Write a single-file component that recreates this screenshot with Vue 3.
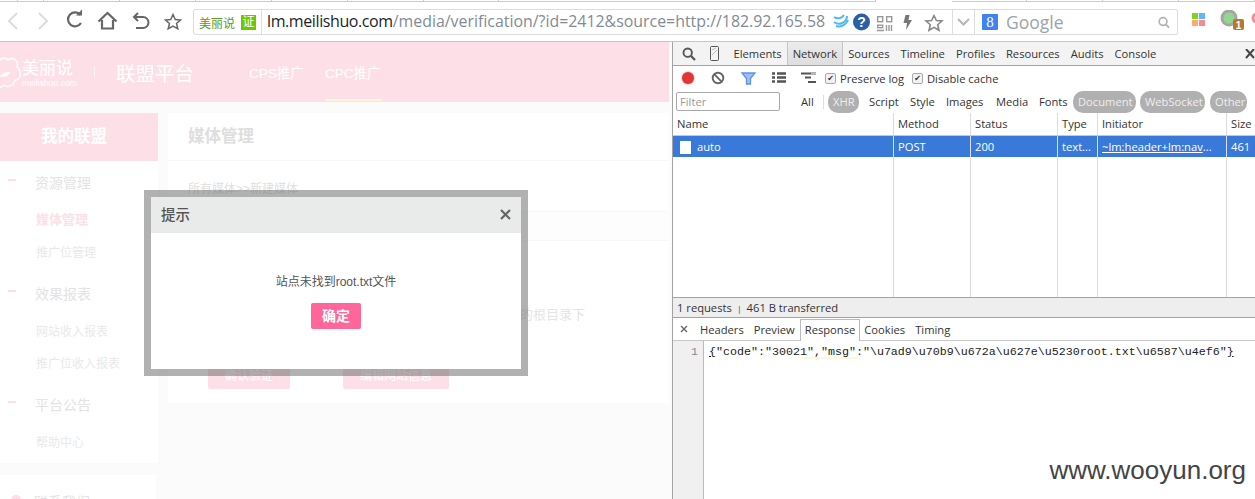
<script setup>
const tabs = ['Elements','Network','Sources','Timeline','Profiles','Resources','Audits','Console']
const topTicks = [23,32,96,95,96,95,95,95]
const nav = [
  { head: '资源管理', items: [{ t: '媒体管理', on: true }, { t: '推广位管理' }] },
  { head: '效果报表', items: [{ t: '网站收入报表' }, { t: '推广位收入报表' }] },
  { head: '平台公告', items: [{ t: '帮助中心' }] }
]
const filters = [
  { t: 'Script', w: 41 }, { t: 'Style', w: 36 }, { t: 'Images', w: 50 }, { t: 'Media', w: 43 }, { t: 'Fonts', w: 34 }
]
const cols = ['Name','Method','Status','Type','Initiator','Size']
</script>

<template>
  <div class="root">
    <div class="tabstrip">
      <span v-for="(w,i) in topTicks" :key="i" class="tick" :style="{ width: w + 'px' }"></span>
      <span class="tick wide"></span>
      <span class="gapTabs"></span>
      <span class="tick t2"></span><span class="tick t2"></span><span class="tick t2"></span><span class="tick t3"></span>
    </div>
    <header class="toolbar">
      <svg class="nav" width="190" height="38" viewBox="0 0 190 38">
        <g fill="none" stroke-linecap="butt" transform="translate(0,-3)">
          <path d="M17 14 L9 22 L17 30" transform="translate(0,-1)" stroke="#dcdcdc" stroke-width="2"/>
          <path d="M39 14 L47 22 L39 30" transform="translate(0,-1)" stroke="#dcdcdc" stroke-width="2"/>
          <path d="M80.5 16 A7 7 0 1 0 81 24" stroke="#666" stroke-width="2.2" transform="translate(0,-1)"/>
          <path d="M76 16 L82 16 L82 10 Z" fill="#666" transform="translate(0,-0.5)"/>
          <path d="M98.5 21.5 L107.5 13 L116.5 21.5 M102 20 V28.5 H113 V20" stroke="#666" stroke-width="2.2"/>
          <path d="M134 17 H143 A5.5 5.5 0 0 1 143 28 H136" stroke="#666" stroke-width="2"/>
          <path d="M138 13 L134 17 L138 21" stroke="#666" stroke-width="2"/>
        </g>
        <path d="M173 11.5 L175.3 16.5 L180.5 17 L176.5 20.4 L177.8 25.8 L173 23 L168.2 25.8 L169.5 20.4 L165.5 17 L170.7 16.5 Z" fill="none" stroke="#666" stroke-width="1.5"/>
      </svg>
      <div class="address">
        <span class="brand">美丽说</span>
        <span class="cert">证</span>
        <span class="url"><b>lm.meilishuo.com</b>/media/verification/?id=2412&amp;source=http://182.92.165.58</span>
        <span class="addrIcons">
          <svg width="119" height="24" viewBox="0 0 119 24">
            <g fill="none" stroke="#4cb8f5" stroke-width="2">
              <path d="M1 12 A8 8 0 0 0 14 6"/><path d="M1 7 A7 7 0 0 0 11 5"/><path d="M3 16 A10 10 0 0 0 15 10"/>
            </g>
            <circle cx="28.5" cy="12" r="8.5" fill="#2d5fa6"/>
            <text x="28.5" y="17" text-anchor="middle" class="qm">?</text>
            <g fill="none" stroke="#999" stroke-width="1.4">
              <rect x="44.7" y="6.7" width="5" height="5"/><rect x="53.7" y="6.7" width="5" height="5"/><rect x="44.7" y="15.2" width="5" height="2.5"/>
              <path d="M44 20.5 H51 M53.5 15 V21 M56 15 V21 M58.5 15 V21"/>
            </g>
            <path d="M72.5 5 L76.5 5 L75.5 10 L79 10 L73 20 L74 13 L70.5 13 Z" fill="#777"/>
            <path d="M101 5.5 L103.4 10.5 L109 11 L104.7 14.7 L106 20.3 L101 17.4 L96 20.3 L97.3 14.7 L93 11 L98.6 10.5 Z" fill="none" stroke="#888" stroke-width="1.6"/>
          </svg>
        </span>
        <span class="drop">
          <svg width="13" height="8" viewBox="0 0 13 8"><path d="M1 1 L6.5 6.5 L12 1" fill="none" stroke="#b5b5b5" stroke-width="2"/></svg>
        </span>
        <span class="search">
          <span class="gbox">8</span>
          <span class="gword">Google</span>
          <svg class="lens" width="12" height="13" viewBox="0 0 13 13"><circle cx="5.5" cy="5.5" r="4.2" fill="none" stroke="#b3b3b3" stroke-width="1.8"/><path d="M8.5 8.5 L12 12" stroke="#b3b3b3" stroke-width="2"/></svg>
        </span>
      </div>
      <svg class="ext" width="63" height="24" viewBox="0 0 63 24">
        <rect x="0" y="3" width="6" height="6" fill="#7ed321"/><rect x="7" y="3" width="6" height="6" fill="#62b5f5"/>
        <rect x="0" y="10" width="6" height="6" fill="#fdaa77"/><rect x="7" y="10" width="6" height="6" fill="#f58a8f"/>
        <circle cx="37" cy="8" r="7" fill="#94d78c" stroke="#a5a5a5" stroke-width="3"/>
        <rect x="41" y="9" width="11" height="11" rx="2" fill="#b57a2e"/>
        <text x="46.5" y="18.5" text-anchor="middle" class="badge1">1</text>
        <circle cx="65" cy="8" r="4" fill="none" stroke="#f08d8d" stroke-width="3"/>
      </svg>
    </header>

    <div class="main">
      <section class="page">
        <div class="pageHead">
          <div class="logo">
            <svg width="22" height="40" viewBox="0 0 22 40" class="cloud"><path d="M-3 14 C-1 6 5 4 8 8 C13 4 19 9 17 15 C22 19 21 28 15 28 C14 34 7 36 4 33 C1 36 -3 36 -6 34" fill="none" stroke="#fff" stroke-width="1.4"/><path d="M0 24 C3 20 7 20 10 20 C9 24 4 26 0 24 Z" fill="#fff"/></svg>
            <div class="logoText"><span class="lz">美丽说</span><span class="le">meilishuo.com</span></div>
          </div>
          <i class="dots"></i>
          <span class="plat">联盟平台</span>
          <span class="hnav">CPS推广</span>
          <span class="hnav cur">CPC推广</span>
        </div>
        <div class="pageBody">
          <aside class="side">
            <div class="sideTitle">我的联盟</div>
            <nav class="sideBody">
              <div v-for="g in nav" :key="g.head" class="group">
                <div class="head"><i class="dash"></i>{{ g.head }}</div>
                <div v-for="it in g.items" :key="it.t" class="item" :class="{ on: it.on }">{{ it.t }}</div>
              </div>
            </nav>
            <div class="contact"><i class="dot"></i>联系我们</div>
          </aside>
          <main class="content">
            <h2 class="cTitle">媒体管理</h2>
            <div class="crumb">所有媒体&gt;&gt;新建媒体</div>
            <div class="strip"></div>
            <p class="note">请将验证文件放到 http://182.92.165.58 的根目录下</p>
            <div class="btns"><span class="btn a">确认验证</span><span class="btn b">编辑网站信息</span></div>
          </main>
        </div>
        <div class="modal">
          <div class="mHead"><span class="mTitle">提示</span><svg width="11" height="11" viewBox="0 0 11 11"><path d="M1 1 L10 10 M10 1 L1 10" stroke="#666" stroke-width="2.2"/></svg></div>
          <div class="mBody">
            <div class="mMsg">站点未找到root.txt文件</div>
            <span class="mBtn">确定</span>
          </div>
        </div>
      </section>

      <section class="dev">
        <div class="devTabs">
          <svg width="14" height="14" viewBox="0 0 14 14" class="mag"><circle cx="5.7" cy="5.7" r="4.2" fill="none" stroke="#555" stroke-width="1.9"/><path d="M8.8 8.8 L13 13" stroke="#555" stroke-width="2.3"/></svg>
          <svg width="9" height="15" viewBox="0 0 9 15" class="phone"><rect x="0.5" y="0.5" width="8" height="14" rx="1" fill="none" stroke="#555"/><path d="M2 4 L6 2 M2 9 L7 4" stroke="#bbb"/></svg>
          <div class="tabList">
            <span v-for="t in tabs" :key="t" class="dtab" :class="{ on: t === 'Network' }">{{ t }}</span>
          </div>
          <svg class="closeX" width="10" height="10" viewBox="0 0 10 10"><path d="M1 0 L9 9 M9 0 L1 9" stroke="#444" stroke-width="2"/></svg>
        </div>
        <div class="devBar">
          <svg width="150" height="16" viewBox="0 0 150 16">
            <circle cx="10" cy="8" r="6.8" fill="#f6c5c5"/>
            <circle cx="10" cy="8" r="6" fill="#e23535"/>
            <circle cx="40" cy="8" r="5.3" fill="none" stroke="#666" stroke-width="1.9"/><path d="M36.2 4.2 L43.8 11.8" stroke="#666" stroke-width="1.9"/>
            <path d="M64 3 H77 L72.5 8.5 V14 H68.5 V8.5 Z" fill="#9cc0f5" stroke="#5b93ec" stroke-width="1.3"/>
            <path d="M94 3.5 H97 M94 7.5 H97 M94 11.5 H97 M99 3.5 H108 M99 7.5 H108 M99 11.5 H108" stroke="#555" stroke-width="2.4"/>
            <path d="M123 3.5 H138 M127 7.5 H133 M130 12 H138" stroke="#555" stroke-width="1.8"/>
            <path d="M133 3.5 H138" stroke="#bbb" stroke-width="1.8"/>
          </svg>
          <label class="chk first"><i class="box">✔</i>Preserve log</label>
          <label class="chk"><i class="box">✔</i>Disable cache</label>
        </div>
        <div class="filterRow">
          <span class="fInput">Filter</span>
          <span class="fAll">All</span>
          <i class="fSep"></i>
          <span class="pill xhr">XHR</span>
          <span v-for="f in filters" :key="f.t" class="fItem" :style="{ width: f.w + 'px' }">{{ f.t }}</span>
          <span class="pill doc">Document</span>
          <span class="pill ws">WebSocket</span>
          <span class="pill oth">Other</span>
        </div>
        <div class="grid">
          <div class="gRow gHead"><span v-for="c in cols" :key="c">{{ c }}</span></div>
          <div class="gRow gSel">
            <span><i class="file"></i>auto</span><span>POST</span><span>200</span><span>text...</span><span><u>~lm:header+lm:nav</u>...</span><span>461</span>
          </div>
          <div class="gRow gFill"><span></span><span></span><span></span><span></span><span></span><span></span></div>
        </div>
        <div class="status">1 requests <i>❘</i> 461 B transferred</div>
        <div class="detTabs">
          <svg width="8" height="8" viewBox="0 0 8 8"><path d="M1 1 L7 7 M7 1 L1 7" stroke="#666" stroke-width="1.4"/></svg>
          <span class="dt first">Headers</span><span class="dt">Preview</span><span class="dt cur">Response</span><span class="dt">Cookies</span><span class="dt">Timing</span>
        </div>
        <div class="code">
          <div class="gutter">1</div>
          <div class="src"><u>{</u>"code":"30021","msg":"\u7ad9\u70b9\u672a\u627e\u5230root.txt\u6587\u4ef6"<u>}</u></div>
        </div>
      </section>
    </div>
    <div class="mark">www.wooyun.org</div>
  </div>
</template>

<style>
html, body { margin: 0; background: #fff; overflow: hidden; }
</style>

<style scoped>
.root { position: relative; width: 1255px; height: 499px; overflow: hidden; background: #fff; font-family: "Liberation Sans", "Noto Sans CJK SC", sans-serif; }
.tabstrip { height: 3px; display: flex; }
.tick { display: block; border-bottom: 1px solid #ccc; border-right: 1px solid #ccc; box-sizing: border-box; height: 2px; }
.tick.wide { width: 475px; }
.gapTabs { width: 95px; }
.tick.t2 { width: 95px; }
.tick.t3 { width: 96px; }
.toolbar { height: 38px; display: flex; border-bottom: 1px solid #c6c6c6; position: relative; }
.nav { flex: none; width: 190px; }
.address { flex: none; margin: 6px 0 0 3px; width: 983px; height: 24px; border: 1px solid #dcdcdc; border-radius: 2px; display: flex; align-items: center; }
.brand { width: 36px; margin-left: 5px; font-size: 12px; color: #5d9a1d; white-space: nowrap; }
.cert { width: 15px; height: 15px; margin-left: 6px; background: #6fc700; color: #fff; font-size: 12px; line-height: 15px; text-align: center; }
.url { margin-left: 5px; padding-left: 5px; border-left: 1px solid #ddd; height: 24px; line-height: 23px; font-family: "Open Sans", sans-serif; font-size: 15.9px; color: #7f8b96; white-space: nowrap; width: 561px; overflow: hidden; }
.url b { font-weight: 400; font-size: 16px; letter-spacing: -.4px; color: #1a1f2a; }
.addrIcons { width: 119px; height: 24px; margin-left: 5px; }
.drop { width: 21px; height: 24px; border-left: 1px solid #ddd; border-right: 1px solid #ddd; display: flex; align-items: center; justify-content: center; }
.search { flex: 1; display: flex; align-items: center; }
.gbox { width: 16px; height: 16px; background: #3f83f2; color: #fff; font-size: 15px; line-height: 16px; text-align: center; margin-left: 7px; border-radius: 1px; font-family: "Liberation Serif", serif; }
.gword { margin-left: 8px; width: 54px; font-family: "Open Sans", sans-serif; font-size: 17.5px; color: #9ba3ad; line-height: 22px; }
.lens { margin-left: 98px; }
.ext { flex: none; margin: 7px 0 0 14px; }
.badge1 { font: bold 10px "Liberation Sans", sans-serif; fill: #fff; }
.qm { font: bold 14px "Liberation Sans", sans-serif; fill: #fff; }

.main { display: flex; height: 458px; }
.page { position: relative; width: 672px; flex: none; background: #fbfbfb; }
.pageHead { width: 669px; height: 60px; background: #fddfe8; display: flex; align-items: center; color: #fff; }
.logo { display: flex; align-items: center; width: 94px; }
.cloud { flex: none; }
.logoText { display: flex; flex-direction: column; margin-top: 3px; }
.lz { font-size: 17px; line-height: 20px; }
.le { font-size: 8.6px; line-height: 9px; color: #fff; white-space: nowrap; }
.dots { width: 1px; height: 10px; border-left: 1px dotted #fff; }
.plat { font-size: 19.5px; margin-left: 20px; width: 133px; }
.hnav { font-size: 13.5px; width: 76px; position: relative; }
.cur::after { content: ""; position: absolute; left: 0; top: 37px; width: 57px; height: 2px; background: #fdf7dc; }
.pageBody { display: flex; padding-top: 11px; }
.side { width: 158px; flex: none; }
.sideTitle { height: 48px; background: #fddfe8; color: #fff; font-weight: 700; font-size: 16.5px; line-height: 46px; text-align: center; padding-right: 10px; box-sizing: border-box; }
.sideBody { background: #fff; height: 302px; box-sizing: border-box; padding-top: 6px; }
.group { margin-bottom: 10px; }
.head { height: 32px; margin-bottom: 5px; line-height: 32px; font-size: 14px; color: #e3e3e3; padding-left: 35px; position: relative; }
.dash { position: absolute; left: 8px; top: 12px; width: 8px; height: 2px; background: #fddfe8; }
.item { height: 32px; line-height: 34px; font-size: 12px; color: #e9e9e9; padding-left: 36px; }
.item.on { color: #fddfe8; font-weight: 700; font-size: 13px; line-height: 32px; }
.contact { margin-top: 12px; width: 156px; height: 30px; background: #fff; font-size: 14px; line-height: 54px; color: #e3e3e3; padding-left: 34px; box-sizing: border-box; position: relative; overflow: hidden; }
.dot { position: absolute; left: 11px; top: 20px; width: 10px; height: 10px; border-radius: 50%; background: #fddfe8; }
.content { width: 501px; margin-left: 10px; height: 290px; background: #fff; }
.cTitle { margin: 0; height: 48px; box-sizing: border-box; border-bottom: 1px solid #f7f7f7; padding-left: 20px; font-size: 16.5px; line-height: 46px; color: #dedede; font-weight: 700; }
.crumb { height: 50px; box-sizing: border-box; padding-left: 20px; line-height: 56px; font-size: 12px; color: #e0e0e0; }
.strip { height: 30px; box-sizing: border-box; border: 1px solid #f8f8f8; border-width: 1px 0; background: #fdfdfd; }
.note { margin: 60px 0 0; width: 417px; height: 28px; line-height: 28px; font-size: 13px; color: #e4e4e4; text-align: right; white-space: nowrap; overflow: hidden; }
.btns { display: flex; margin: 38px 0 0 40px; }
.btn { display: block; height: 22px; background: #fddfe8; color: #fff; font-size: 12px; line-height: 19px; text-align: center; border-radius: 2px; }
.btn.a { width: 82px; }
.btn.b { width: 106px; margin-left: 53px; }
.modal { position: absolute; left: 144px; top: 148px; width: 370px; height: 172px; border: 7px solid rgba(100,100,100,.5); background: #fff; background-clip: padding-box; }
.mHead { height: 36px; background: #e9ebea; display: flex; align-items: center; justify-content: space-between; padding: 0 10px 0 10px; font-size: 14.5px; color: #555; }
.mTitle { margin-top: -4px; font-weight: 500; }
.mHead svg { margin-top: -2px; }
.mBody { display: flex; flex-direction: column; align-items: center; }
.mMsg { margin-top: 37px; height: 24px; line-height: 24px; font-size: 12px; color: #555; }
.mBtn { margin-top: 9px; width: 50px; height: 26px; border-radius: 2px; background: #ff6699; color: #fff; font-size: 14px; font-weight: 700; line-height: 26px; text-align: center; }

.dev { flex: 1; min-width: 0; border-left: 1px solid #a3a3a3; font-family: "Open Sans", "Liberation Sans", sans-serif; font-size: 11.2px; color: #333; display: flex; flex-direction: column; }
.devTabs { height: 23px; background: #f3f3f3; border-bottom: 1px solid #a3a3a3; display: flex; align-items: center; position: relative; flex: none; }
.mag { margin-left: 9px; }
.phone { margin-left: 14px; }
.tabList { display: flex; margin-left: 9px; height: 23px; align-items: center; }
.dtab { padding: 0 5.5px; height: 23px; line-height: 23px; white-space: nowrap; }
.dtab.on { background: linear-gradient(#ececec, #dedede); box-shadow: inset 1px 0 #c4c4c4, inset -1px 0 #c4c4c4; }
.closeX { position: absolute; right: 0; top: 7px; }
.devBar { height: 24px; display: flex; align-items: center; padding-left: 5px; flex: none; }
.chk { display: flex; align-items: center; white-space: nowrap; }
.chk.first { margin-left: -3px; width: 87px; }
.box { width: 11px; height: 11px; border: 1px solid #aaa; border-radius: 2px; box-sizing: border-box; margin-right: 4px; font-style: normal; font-size: 8px; line-height: 9px; text-align: center; background: #f2f2f2; color: #333; font-family: "DejaVu Sans", sans-serif; }
.filterRow { height: 23px; display: flex; align-items: center; padding-left: 3px; flex: none; white-space: nowrap; }
.fInput { width: 104px; height: 19px; box-sizing: border-box; border: 1px solid #a9a9a9; border-radius: 2px; padding-left: 3px; line-height: 17px; color: #999; }
.fAll { margin-left: 21px; width: 22px; }
.fSep { width: 1px; height: 14px; background: #ddd; }
.pill { height: 22px; line-height: 22px; border-radius: 10px; background: #b0b0b0; color: #eee; overflow: hidden; font-size: 11.2px; padding-left: 5px; box-sizing: border-box; }
.xhr { width: 31px; margin-left: 4px; margin-right: 10px; }
.fItem { display: block; }
.doc { width: 63px; }
.ws { width: 65px; margin-left: 4px; }
.oth { width: 37px; margin-left: 5px; }
.grid { flex: none; height: 185px; box-sizing: border-box; display: flex; flex-direction: column; border-bottom: 1px solid #a3a3a3; }
.gRow { display: grid; grid-template-columns: 221px 77px 87px 40px 129px 1fr; flex: none; }
.gRow span { box-sizing: border-box; border-right: 1px solid #dcdcdc; padding-left: 4px; white-space: nowrap; overflow: hidden; }
.gRow span:last-child { border-right: 0; }
.gHead { height: 23px; line-height: 22px; border-bottom: 1px solid #c8c8c8; box-sizing: border-box; }
.gSel { height: 21px; line-height: 21px; background: #3879d9; color: #fff; }
.gSel span { border-right-color: #d7e3f5; }
.file { display: inline-block; width: 11px; height: 13px; background: #fff; margin: 0 6px 0 3px; vertical-align: -3px; }
.gFill { flex: 1; }
.status { height: 19px; line-height: 19px; padding-left: 4px; background: #eee; border-bottom: 1px solid #a3a3a3; flex: none; }
.status i { font-style: normal; font-size: 8px; color: #555; margin: 0 1px; }
.detTabs { height: 22px; flex: none; display: flex; align-items: center; border-bottom: 1px solid #c8c8c8; padding-left: 7px; }
.dt { margin-left: 10px; height: 22px; line-height: 24px; }
.dt.first { margin-left: 12px; }
.dt.cur { border: 1px solid #bbb; border-bottom: 0; background: #fff; line-height: 20px; padding: 0 4px; margin: 0 -6px 0 5px; height: 21px; align-self: flex-end; position: relative; top: 1px; }
.code { flex: 1; display: flex; min-height: 0; }
.gutter { width: 31px; height: 100%; background: #f0f0f0; border-right: 1px solid #bbb; text-align: right; padding-right: 5px; box-sizing: border-box; color: #888; font-family: "Liberation Mono", monospace; font-size: 11.6px; line-height: 22px; }
.src { padding-left: 5px; font-family: "Liberation Mono", monospace; font-size: 11.66px; line-height: 22px; color: #222; white-space: nowrap; }
.mark { position: absolute; right: 9px; top: 455px; font-size: 26px; line-height: 30px; color: #444; }
</style>
